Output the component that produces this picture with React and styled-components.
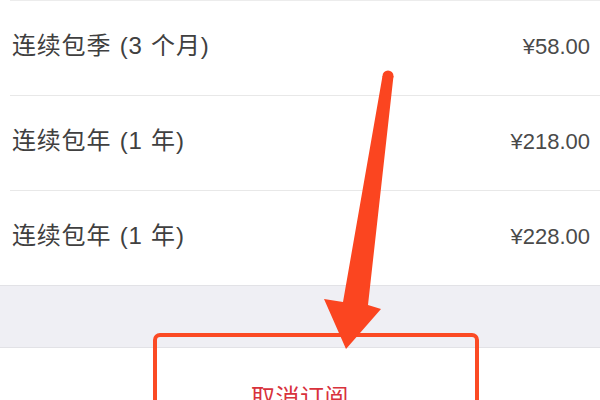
import React from "react";
import styled, { createGlobalStyle } from "styled-components";

const Global = createGlobalStyle`
  html, body { margin: 0; padding: 0; background: #ffffff; }
  body { width: 600px; height: 400px; overflow: hidden; }
`;

const Page = styled.div`
  position: relative;
  width: 600px;
  height: 400px;
  overflow: hidden;
  background: #ffffff;
  font-family: "Liberation Sans", "Noto Sans CJK SC", sans-serif;
`;

const List = styled.div`
  display: flex;
  flex-direction: column;
  border-top: 1px solid #ececec;
  margin-left: 10px;
`;

const Row = styled.div`
  height: 94px;
  display: flex;
  align-items: center;
  justify-content: space-between;
  padding: 0 10px 0 2px;
  border-bottom: ${(p) => (p.$last ? "none" : "1px solid #e8e8e8")};
  box-sizing: content-box;
`;

const Name = styled.span`
  font-size: 24px;
  line-height: 1;
  color: #404040;
  letter-spacing: 0.8px;
  word-spacing: 1px;
  margin-top: -4px;
`;

const Price = styled.span`
  font-size: 22px;
  line-height: 1;
  color: #4a4a4a;
  margin-top: -3px;
`;

const Gap = styled.div`
  height: 61px;
  background: #efeff4;
  border-top: 1px solid #e2e2e6;
  border-bottom: 1px solid #e2e2e6;
`;

const Action = styled.div`
  height: 95px;
  display: flex;
  align-items: center;
  justify-content: center;
`;

const ActionText = styled.span`
  font-size: 24px;
  color: #d8323c;
  letter-spacing: 0.5px;
`;

const Highlight = styled.div`
  position: absolute;
  left: 153px;
  top: 333px;
  width: 318px;
  height: 120px;
  border: 4px solid #fb4a24;
  border-radius: 7px;
`;

const ArrowSvg = styled.svg`
  position: absolute;
  left: 0;
  top: 0;
  pointer-events: none;
`;

const plans = [
  { name: "连续包季 (3 个月)", price: "¥58.00" },
  { name: "连续包年 (1 年)", price: "¥218.00" },
  { name: "连续包年 (1 年)", price: "¥228.00" },
];

export default function App() {
  return (
    <>
      <Global />
      <Page>
        <List>
          {plans.map((p, i) => (
            <Row key={i} $last={i === plans.length - 1}>
              <Name>{p.name}</Name>
              <Price>{p.price}</Price>
            </Row>
          ))}
        </List>
        <Gap />
        <Action>
          <ActionText>取消订阅</ActionText>
        </Action>
        <Highlight />
        <ArrowSvg width="600" height="400" viewBox="0 0 600 400">
          <circle cx="388" cy="76" r="5.5" fill="#fb4520" />
          <polygon
            points="382.5,76 393.5,76 368,305 381,309 346,349 324,299 343,302"
            fill="#fb4520"
          />
        </ArrowSvg>
      </Page>
    </>
  );
}
